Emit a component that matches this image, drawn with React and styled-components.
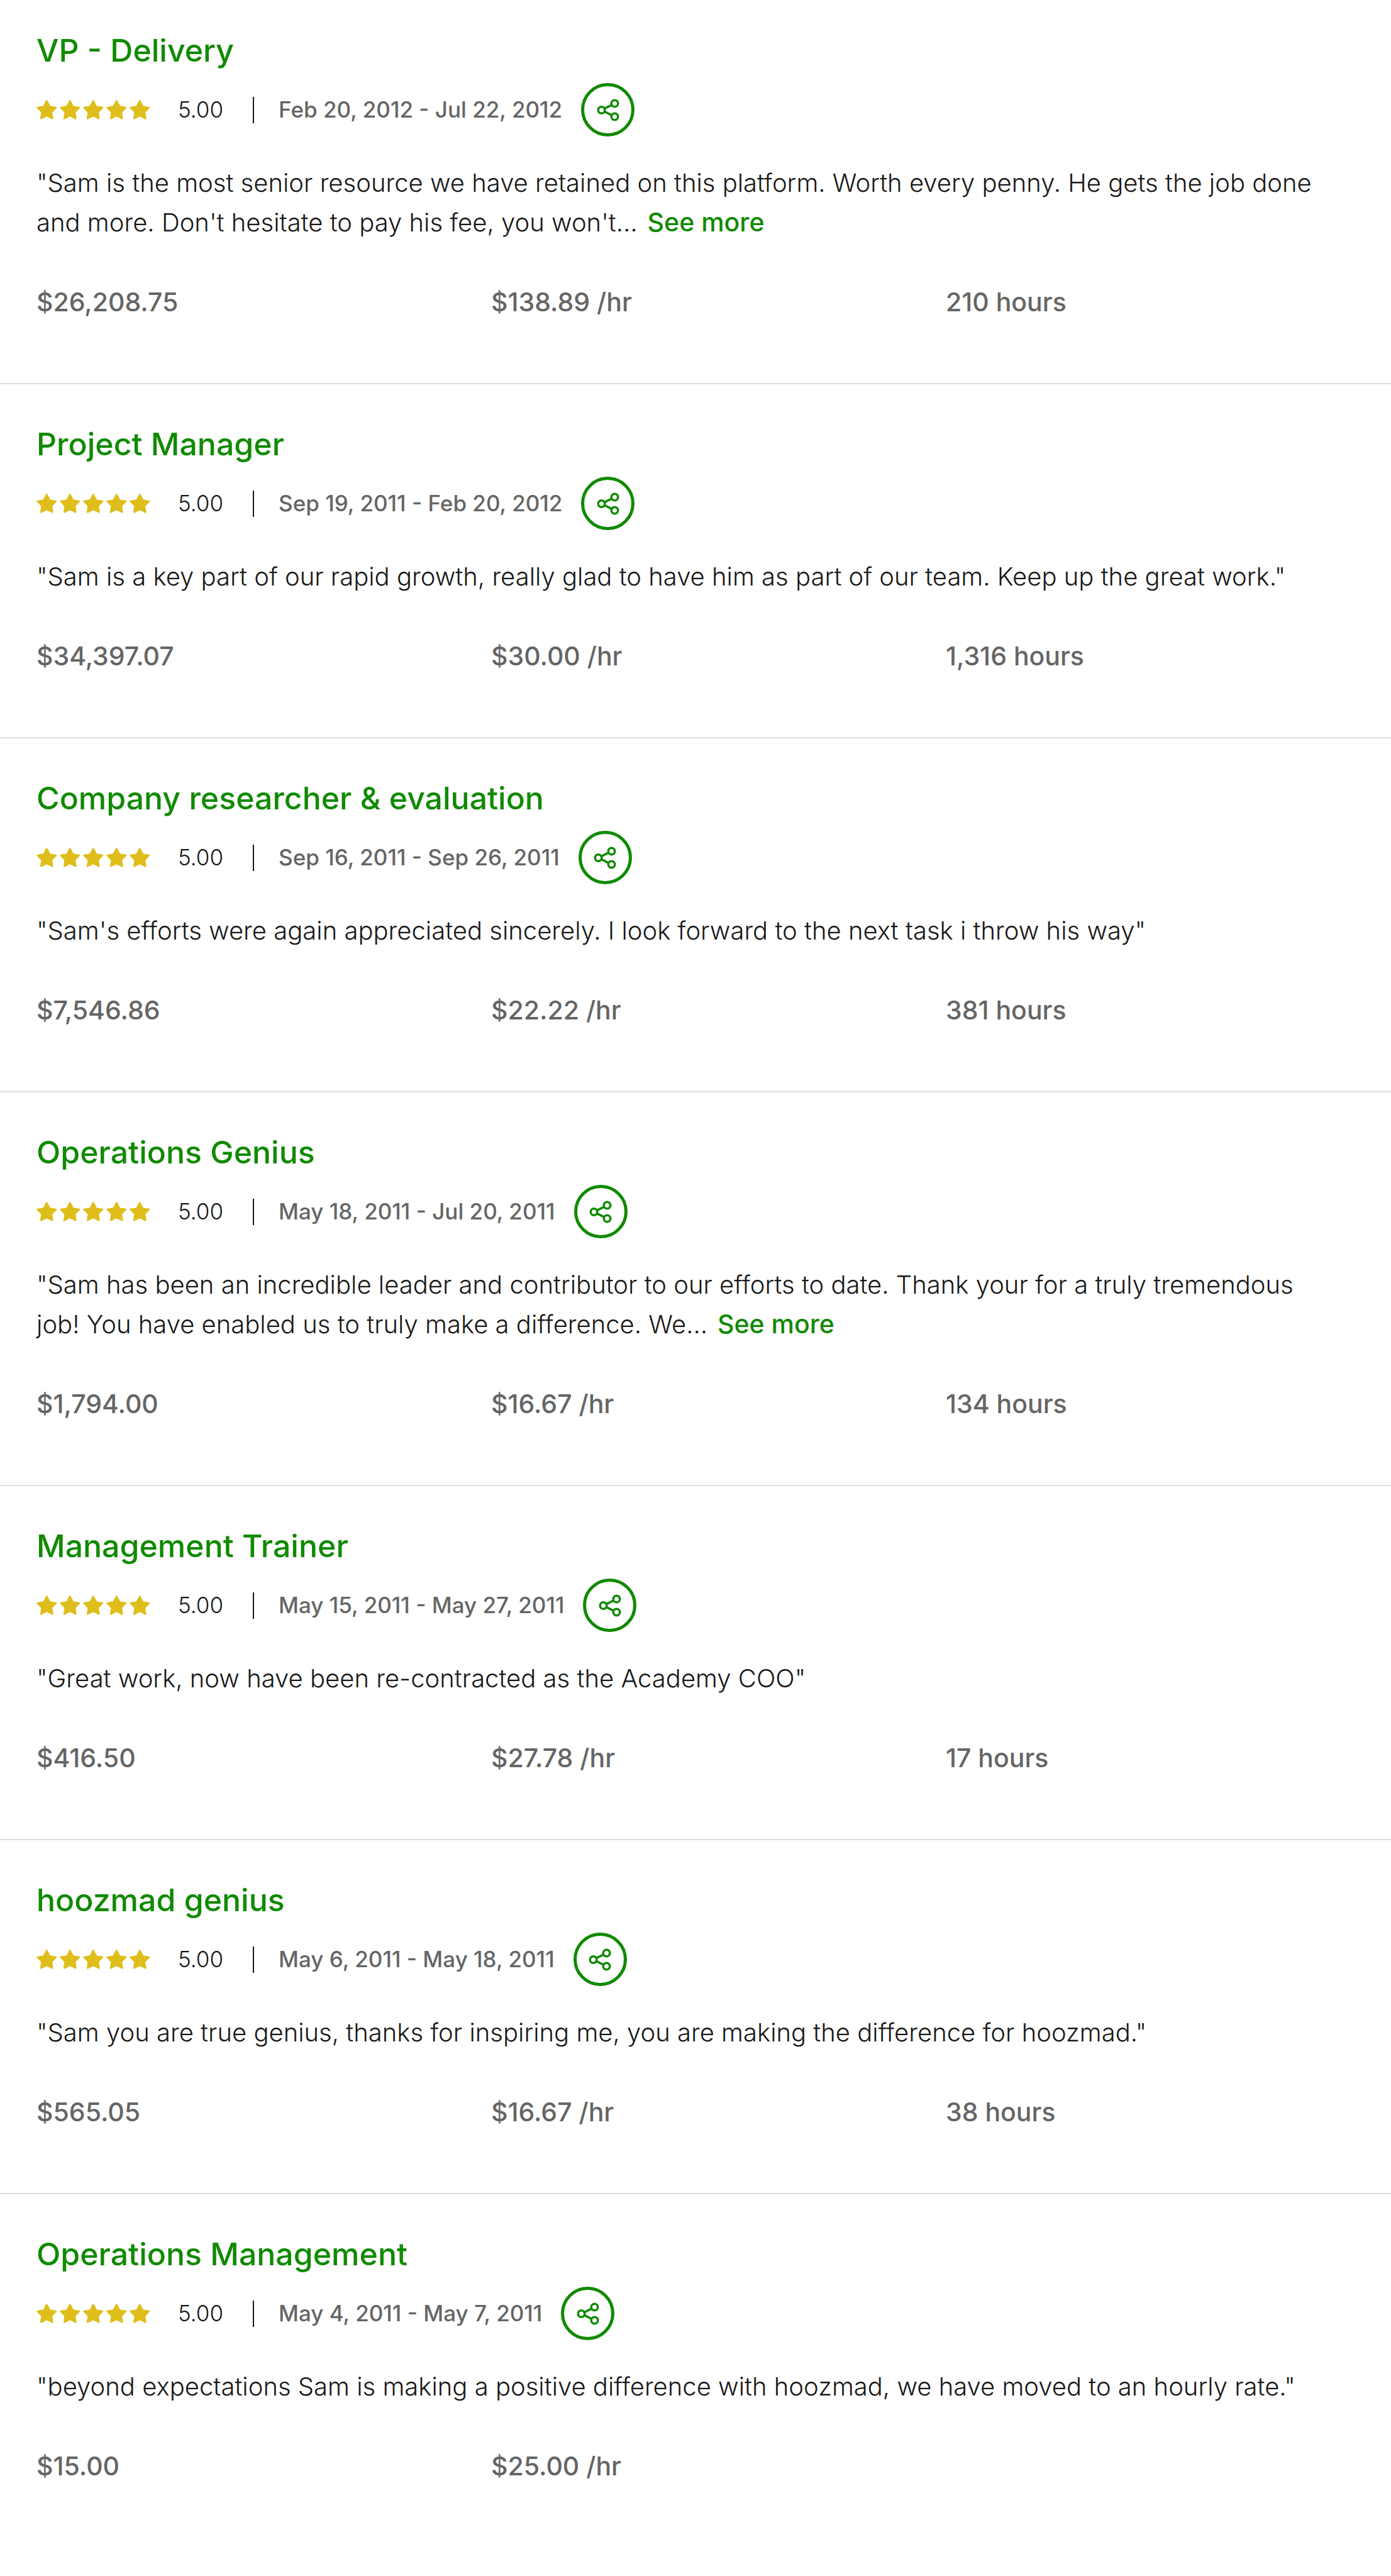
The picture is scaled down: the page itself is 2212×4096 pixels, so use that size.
import React from 'react';
import styled, { createGlobalStyle } from 'styled-components';

const COLORS = {
  green: '#108a00',
  star: '#dfbe1c',
  text: '#181818',
  muted: '#656565',
  border: '#dfdfdf',
  white: '#ffffff'
};

const WEIGHTS = {
  normal: 350,
  medium: 500
};

const JOBS = [
  {
    title: 'VP - Delivery',
    rating: '5.00',
    dates: 'Feb 20, 2012 - Jul 22, 2012',
    feedback:
      '"Sam is the most senior resource we have retained on this platform. Worth every penny. He gets the job done and more. Don\'t hesitate to pay his fee, you won\'t…',
    isTruncated: true,
    earned: '$26,208.75',
    rate: '$138.89 /hr',
    hours: '210 hours'
  },
  {
    title: 'Project Manager',
    rating: '5.00',
    dates: 'Sep 19, 2011 - Feb 20, 2012',
    feedback:
      '"Sam is a key part of our rapid growth, really glad to have him as part of our team. Keep up the great work."',
    earned: '$34,397.07',
    rate: '$30.00 /hr',
    hours: '1,316 hours'
  },
  {
    title: 'Company researcher & evaluation',
    rating: '5.00',
    dates: 'Sep 16, 2011 - Sep 26, 2011',
    feedback:
      '"Sam\'s efforts were again appreciated sincerely. I look forward to the next task i throw his way"',
    earned: '$7,546.86',
    rate: '$22.22 /hr',
    hours: '381 hours'
  },
  {
    title: 'Operations Genius',
    rating: '5.00',
    dates: 'May 18, 2011 - Jul 20, 2011',
    feedback:
      '"Sam has been an incredible leader and contributor to our efforts to date. Thank your for a truly tremendous job! You have enabled us to truly make a difference. We…',
    isTruncated: true,
    earned: '$1,794.00',
    rate: '$16.67 /hr',
    hours: '134 hours'
  },
  {
    title: 'Management Trainer',
    rating: '5.00',
    dates: 'May 15, 2011 - May 27, 2011',
    feedback: '"Great work, now have been re-contracted as the Academy COO"',
    earned: '$416.50',
    rate: '$27.78 /hr',
    hours: '17 hours'
  },
  {
    title: 'hoozmad genius',
    rating: '5.00',
    dates: 'May 6, 2011 - May 18, 2011',
    feedback:
      '"Sam you are true genius, thanks for inspiring me, you are making the difference for hoozmad."',
    earned: '$565.05',
    rate: '$16.67 /hr',
    hours: '38 hours'
  },
  {
    title: 'Operations Management',
    rating: '5.00',
    dates: 'May 4, 2011 - May 7, 2011',
    feedback:
      '"beyond expectations Sam is making a positive difference with hoozmad, we have moved to an hourly rate."',
    earned: '$15.00',
    rate: '$25.00 /hr'
  }
];

const StarIcon = () => (
  <StarSvg viewBox='0 0 42 42' aria-hidden='true'>
    <path d='M18.5 5.1l5.3 10.2 11.3 1.9-8 8.2 1.7 11.4-10.3-5.2-10.3 5.2 1.7-11.4-8-8.2 11.3-1.9z' />
  </StarSvg>
);

const ShareIcon = () => (
  <ShareSvg viewBox='0 0 48 48' aria-hidden='true'>
    <circle cx='12' cy='24' r='6' />
    <circle cx='36' cy='12' r='6' />
    <circle cx='36' cy='36' r='6' />
    <path d='M17.4 21.3l13.2-6.6M17.4 26.7l13.2 6.6' />
  </ShareSvg>
);

const Job = ({ title, rating, dates, feedback, isTruncated, earned, rate, hours }) => (
  <Item>
    <Title>
      <TitleLink href='#'>{title}</TitleLink>
    </Title>
    <Meta>
      <Stars role='img' aria-label={`${rating} out of 5 stars`}>
        {[1, 2, 3, 4, 5].map((n) => (
          <StarIcon key={n} />
        ))}
      </Stars>
      <span>{rating}</span>
      <Divider />
      <Dates>{dates}</Dates>
      <ShareButton type='button' aria-label={`Share ${title}`}>
        <ShareIcon />
      </ShareButton>
    </Meta>
    <Feedback>
      {feedback}
      {isTruncated && <SeeMore type='button'>See more</SeeMore>}
    </Feedback>
    <Stats>
      <span>{earned}</span>
      <span>{rate}</span>
      {hours && <span>{hours}</span>}
    </Stats>
  </Item>
);

const App = () => (
  <>
    <GlobalStyle />
    <List>
      {JOBS.map((job) => (
        <Job key={job.title} {...job} />
      ))}
    </List>
  </>
);

const GlobalStyle = createGlobalStyle`
  *,
  *::before,
  *::after {
    box-sizing: border-box;
  }

  body {
    margin: 0;
    background-color: ${COLORS.white};
    color: ${COLORS.text};
    font-family: Inter, 'Liberation Sans', sans-serif;
    font-size: 40px;
    font-weight: ${WEIGHTS.normal};
    line-height: 63px;
  }
`;

const List = styled.ul`
  margin: 0;
  padding: 0;
  list-style: none;
`;

const Item = styled.li`
  padding: 63px 58px 97px;
  border-bottom: 2px solid ${COLORS.border};

  &:first-child {
    padding-top: 48px;
  }

  &:last-child {
    border-bottom: none;
  }
`;

const Title = styled.h3`
  margin: 0 0 20px;
  font-size: 50px;
  font-weight: ${WEIGHTS.medium};
  line-height: 64px;
`;

const TitleLink = styled.a`
  color: ${COLORS.green};
  text-decoration: none;
`;

const Meta = styled.div`
  display: flex;
  align-items: center;
  margin-bottom: 42px;
  font-size: 35px;
`;

const Stars = styled.div`
  display: flex;
  margin-right: 40px;
`;

const StarSvg = styled.svg`
  width: 37px;
  height: 37px;
  fill: ${COLORS.star};
  stroke: ${COLORS.star};
  stroke-width: 3;
  stroke-linejoin: round;
`;

const Divider = styled.span`
  width: 2px;
  height: 42px;
  margin: 0 39px 0 47px;
  background-color: ${COLORS.text};
`;

const Dates = styled.span`
  color: ${COLORS.muted};
  font-weight: ${WEIGHTS.medium};
`;

const ShareButton = styled.button`
  display: flex;
  align-items: center;
  justify-content: center;
  width: 85px;
  height: 85px;
  margin-left: 30px;
  padding: 0;
  border: 5px solid ${COLORS.green};
  border-radius: 50%;
  background: none;
  color: ${COLORS.green};
  cursor: pointer;
`;

const ShareSvg = styled.svg`
  width: 42px;
  height: 42px;
  fill: none;
  stroke: currentColor;
  stroke-width: 4;
`;

const Feedback = styled.p`
  margin: 0 0 64px;
  padding-right: 48px;
`;

const SeeMore = styled.button`
  margin-left: 16px;
  padding: 0;
  border: none;
  background: none;
  color: ${COLORS.green};
  font: inherit;
  font-size: 41px;
  font-weight: ${WEIGHTS.medium};
  line-height: 48px;
  cursor: pointer;
`;

const Stats = styled.div`
  display: grid;
  grid-template-columns: repeat(3, 1fr);
  column-gap: 73px;
  color: ${COLORS.muted};
  font-size: 41px;
  font-weight: ${WEIGHTS.medium};
`;

export default App;
